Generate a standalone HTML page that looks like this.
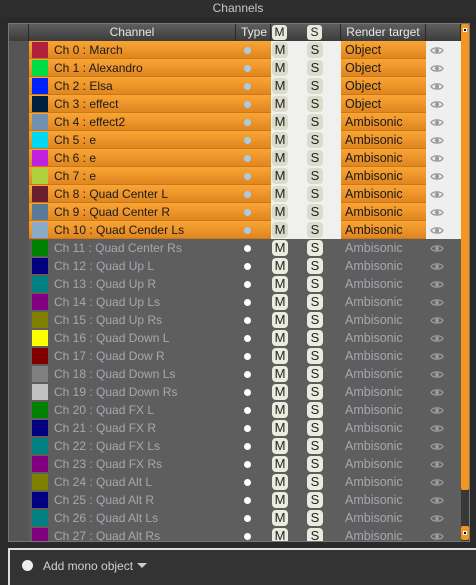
<!DOCTYPE html><html><head><style>
*{margin:0;padding:0;box-sizing:border-box}
body{width:476px;height:585px;background:#2a2a2a;font-family:"Liberation Sans",sans-serif;font-size:12px;position:relative;overflow:hidden}
.title{position:absolute;left:0;top:0;width:476px;height:17px;background:#2e2e2e;color:#c8c8c8;text-align:center;line-height:16px;font-size:12px}
.frame{position:absolute;left:8px;top:23px;width:462px;height:519px;border:1px solid #777;background:#5e5e5e;overflow:hidden}
.hdr{position:absolute;left:0;top:0;width:452px;height:17px;background:linear-gradient(#5e5e5e,#3c3c3c);color:#e8e8e8;font-size:12px}
.hdr div.c{position:absolute;top:0;height:17px;line-height:17px;text-align:center;border-right:1px solid #2a2a2a}
.hb{position:absolute;top:1px;width:15px;height:15px;border-radius:3px;background:#e8e8dc;color:#222;text-align:center;line-height:15px;font-size:12px}
.row{position:absolute;left:0;width:452px;height:18px}
.idx{position:absolute;left:0;top:0;width:20px;height:18px;background:#555}
.sel .or{position:absolute;left:20px;top:0;width:242px;height:18px;background:linear-gradient(#fba535,#df8620);border-bottom:1px solid #c87818}
.sel .ms{position:absolute;left:262px;top:0;width:70px;height:18px;background:#f0f0ee}
.sel .rt{position:absolute;left:332px;top:0;width:85px;height:18px;background:linear-gradient(#fba535,#df8620);border-bottom:1px solid #c87818}
.sel .ey{position:absolute;left:417px;top:0;width:35px;height:18px;background:#efefef}
.sw{position:absolute;left:23px;top:1px;width:16px;height:16px}
.nm{position:absolute;left:45px;top:0;line-height:18px;color:#1a1a1a}
.un .nm,.un .rtt{color:#a4a8b0}
.dot{position:absolute;left:235px;top:6px;width:7px;height:7px;border-radius:50%;background:#fff}
.sel .dot{background:#a8cce8}
.b{position:absolute;top:1px;width:16px;height:16px;border-radius:4px;background:#ebebdf;color:#222;text-align:center;line-height:16px;font-size:13px}
.sel .b{background:#dcdccc}
.rtt{position:absolute;left:336px;top:0;line-height:18px;color:#1a1a1a;font-size:12.5px}
.eye{position:absolute;left:421px;top:5px}
.sb{position:absolute;left:452px;top:0;width:8px;height:517px;background:#383838}
.bot{position:absolute;left:8px;top:548px;width:468px;height:37px;background:#333;border-top:2px solid #ddd;border-left:2px solid #ddd}
</style></head><body>
<div class="title">Channels</div>
<div class="frame">
<div class="hdr">
<div class="c" style="left:0;width:20px"></div>
<div class="c" style="left:20px;width:207px">Channel</div>
<div class="c" style="left:227px;width:35px;text-align:left;padding-left:5px">Type</div>
<div class="c" style="left:262px;width:70px"></div>
<div class="c" style="left:332px;width:85px">Render target</div>
<div class="c" style="left:417px;width:35px"></div>
<div class="hb" style="left:263px">M</div>
<div class="hb" style="left:298px">S</div>
</div>
<div id="rows"></div>
<div class="sb"><div style="position:absolute;left:0;top:0;width:8px;height:466px;background:#f3961f;border-radius:2px"></div><div style="position:absolute;left:0;top:502px;width:8px;height:14px;background:#f3961f;border-radius:2px"><div style="position:absolute;left:2px;top:5px;width:4px;height:4px;background:#000;border:1px solid #fff"></div></div><div style="position:absolute;left:0;top:0;width:8px;height:12px;background:#f3961f;border-radius:2px"><div style="position:absolute;left:2px;top:4px;width:4px;height:4px;background:#000;border:1px solid #fff"></div></div></div>
</div>
<div class="bot"><div style="position:absolute;left:12px;top:10px;width:11px;height:11px;border-radius:50%;background:#eee"></div><div style="position:absolute;left:33px;top:9px;color:#d0d0d0;font-size:12px">Add mono object</div><div style="position:absolute;left:127px;top:13px;width:0;height:0;border-left:5px solid transparent;border-right:5px solid transparent;border-top:5px solid #ccc"></div></div>
<script>
var names=["March","Alexandro","Elsa","effect","effect2","e","e","e","Quad Center L","Quad Center R","Quad Cender Ls","Quad Center Rs","Quad Up L","Quad Up R","Quad Up Ls","Quad Up Rs","Quad Down L","Quad Dow R","Quad Down Ls","Quad Down Rs","Quad FX L","Quad FX R","Quad FX Ls","Quad FX Rs","Quad Alt L","Quad Alt R","Quad Alt Ls","Quad  Alt Rs"];
var cols=["#b0213c","#00dd44","#0022ff","#002040","#7090b0","#00d8f0","#c020e0","#b0d040","#6a1f2f","#5a7a9a","#8aaac8","#008000","#000080","#008080","#800080","#808000","#ffff00","#800000","#808080","#c0c0c0","#008000","#000080","#008080","#800080","#808000","#000080","#008080","#800080"];
var h="";
for(var i=0;i<28;i++){var s=i<11;h+='<div class="row '+(s?'sel':'un')+'" style="top:'+(17+i*18)+'px"><div class="idx"></div>'+(s?'<div class="or"></div><div class="ms"></div><div class="rt"></div><div class="ey"></div>':'')+'<div class="sw" style="background:'+cols[i]+'"></div><div class="nm">Ch '+i+' : '+names[i]+'</div><div class="dot"></div><div class="b" style="left:263px">M</div><div class="b" style="left:298px">S</div><div class="rtt">'+(i<4?'Object':'Ambisonic')+'</div><svg class="eye" width="14" height="9" viewBox="0 0 14 9"><path d="M1 4.5C3 1 11 1 13 4.5C11 8 3 8 1 4.5Z" fill="none" stroke="#999" stroke-width="1.3"/><circle cx="7" cy="4.5" r="2" fill="#999"/></svg></div>';}
document.getElementById("rows").innerHTML=h;
</script>
</body></html>
